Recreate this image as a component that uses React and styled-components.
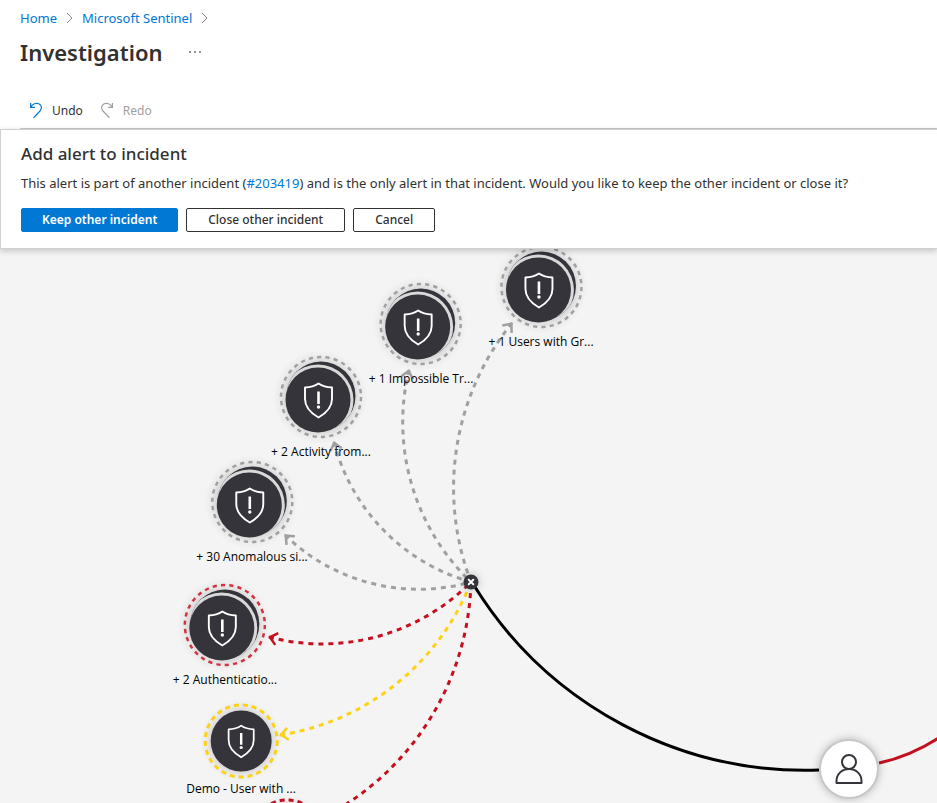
import React from "react";
import styled, { createGlobalStyle, css } from "styled-components";

const GlobalStyle = createGlobalStyle`
  *, *::before, *::after { box-sizing: border-box; }
  body {
    margin: 0;
    background: #fff;
    color: #323130;
    font-family: "Noto Sans", "Open Sans", sans-serif;
    font-size: 13px;
  }
  button { font-family: inherit; }
`;

const Page = styled.div`
  display: flex;
  flex-direction: column;
  height: 100vh;
  overflow: hidden;
`;

const Header = styled.header`
  flex: none;
  padding: 8px 0 0 20px;
`;

const Breadcrumb = styled.nav`
  display: flex;
  align-items: center;
  gap: 9px;
  height: 20px;
  line-height: 20px;
`;

const Link = styled.a`
  color: #0078d4;
  text-decoration: none;
  &:hover { text-decoration: underline; }
`;

const TitleRow = styled.div`
  display: flex;
  align-items: center;
  gap: 26px;
  height: 48px;
`;

const Title = styled.h1`
  margin: 0;
  font-size: 22px;
  line-height: 32px;
  font-weight: 600;
`;

const MoreButton = styled.button`
  display: flex;
  padding: 0;
  border: 0;
  background: none;
  cursor: pointer;
`;

const Toolbar = styled.div`
  display: flex;
  align-items: center;
  gap: 16px;
  height: 53px;
  padding: 18px 0 0 8px;
  border-bottom: 1px solid #c8c8c8;
`;

const ToolButton = styled.button`
  display: flex;
  align-items: center;
  gap: 8px;
  padding: 0;
  border: 0;
  background: none;
  font-size: 12px;
  line-height: 20px;
  color: #323130;
  cursor: pointer;
  &:disabled { color: #a19f9d; cursor: default; }
`;

const Prompt = styled.section`
  flex: none;
  position: relative;
  z-index: 1;
  height: 120px;
  padding: 12px 20px;
  background: #fff;
  border: 1px solid #d0d0d0;
  border-right: 0;
  box-shadow: 0 2px 6px rgba(0, 0, 0, 0.2);
`;

const PromptTitle = styled.h2`
  margin: 0 0 7px;
  font-size: 17px;
  line-height: 24px;
  font-weight: 500;
`;

const PromptText = styled.p`
  margin: 0 0 15px;
  line-height: 20px;
  white-space: nowrap;
`;

const Actions = styled.div`
  display: flex;
  gap: 8px;
`;

const ActionButton = styled.button`
  height: 24px;
  padding: 0 21px;
  border: 1px solid #323130;
  border-radius: 2px;
  background: #fff;
  color: #323130;
  font-size: 12px;
  line-height: 20px;
  font-weight: 500;
  cursor: pointer;
  ${(p) =>
    p.$primary &&
    css`
      padding: 0 20px;
      border-color: #0078d4;
      background: #0078d4;
      color: #fff;
      font-weight: 600;
    `}
`;

const Canvas = styled.main`
  flex: 1;
  position: relative;
  overflow: hidden;
  background: #f4f4f4;
`;

const EdgeLayer = styled.svg`
  position: absolute;
  inset: 0;
  width: 100%;
  height: 100%;
`;

const NodeButton = styled.button`
  position: absolute;
  left: ${(p) => p.$x}px;
  top: ${(p) => p.$y}px;
  transform: translate(-50%, -50px);
  display: flex;
  flex-direction: column;
  align-items: center;
  padding: 0;
  border: 0;
  background: none;
  cursor: pointer;
  svg { display: block; }
`;

const NodeLabel = styled.span`
  margin-top: ${(p) => (p.$single ? -12 : -5)}px;
  font-family: "Open Sans", "Noto Sans", sans-serif;
  font-size: 12px;
  line-height: 20px;
  white-space: nowrap;
  color: #000;
`;

const RoundButton = styled.button`
  position: absolute;
  left: ${(p) => p.$x}px;
  top: ${(p) => p.$y}px;
  transform: translate(-50%, -50%);
  display: grid;
  place-items: center;
  width: ${(p) => p.$size}px;
  height: ${(p) => p.$size}px;
  padding: 0;
  border: ${(p) => (p.$dark ? "0" : "2px solid #c8c8c8")};
  border-radius: 50%;
  background: ${(p) => (p.$dark ? "#36343b" : "#fff")};
  box-shadow: 0 0 8px rgba(0, 0, 0, 0.25);
  cursor: pointer;
`;

const GREY = "#a0a0a0";
const RED = "#c50f1f";
const YELLOW = "#fcd116";
const DARK = "#36343b";
const HUB = { x: 471, y: 333 };

const edges = [
  { x: 512, y: 74, color: GREY, id: "grey" },
  { x: 409, y: 121, color: GREY, id: "grey" },
  { x: 334, y: 193, color: GREY, id: "grey" },
  { x: 285, y: 286, color: GREY, id: "grey" },
  { x: 269, y: 388, color: RED, id: "red" },
  { x: 280, y: 486, color: YELLOW, id: "yellow" },
  { x: 328, y: 566, color: RED, id: "red" },
];

const nodes = [
  { x: 541, y: 38, label: "+ 1 Users with Gr...", color: GREY },
  { x: 421, y: 75, label: "+ 1 Impossible Tr...", color: GREY },
  { x: 321, y: 148, label: "+ 2 Activity from...", color: GREY },
  { x: 252, y: 253, label: "+ 30 Anomalous si...", color: GREY },
  { x: 225, y: 376, label: "+ 2 Authenticatio...", color: "#d13440" },
  { x: 241, y: 492, label: "Demo - User with ...", color: YELLOW, single: true },
  { x: 287, y: 587, label: "", color: RED, single: true },
];

const arc = (x1, y1, x2, y2) => {
  const r = Math.hypot(x2 - x1, y2 - y1);
  return `M${x1} ${y1} A${r} ${r} 0 0 0 ${x2} ${y2}`;
};

function Chevron() {
  return (
    <svg width="7" height="12" viewBox="0 0 7 12" fill="none" stroke="#8a8886" aria-hidden="true">
      <path d="M1 1l5 5-5 5" />
    </svg>
  );
}

function UndoIcon({ flip }) {
  return (
    <svg width="16" height="18" viewBox="0 0 16 18" fill="none" stroke={flip ? "#a19f9d" : "#0078d4"} strokeWidth="1.2" aria-hidden="true">
      <g transform={flip ? "translate(16 0) scale(-1 1)" : undefined}>
        <path d="M2.600 1V5.400H7M2.700 5.300C4.500 1.800 8 .6 10.800 1.800C13.800 3.200 14.300 6.500 12 9L5.500 15.800" />
      </g>
    </svg>
  );
}

function Shield({ x, y, scale = 1 }) {
  return (
    <g transform={`translate(${x} ${y}) scale(${scale})`} fill="none" stroke="#fff">
      <path
        d="M0 -16.500C-3.500 -14 -8 -12.600 -13.500 -12.500V-1C-13.500 8 -7 13.500 0 17.500C7 13.500 13.500 8 13.500 -1V-12.500C8 -12.600 3.500 -14 0 -16.500Z"
        strokeWidth="1.900"
        strokeLinejoin="round"
      />
      <path d="M0 -8.500V4" strokeWidth="2.600" />
      <circle cx="0" cy="7" r="1.700" fill="#fff" stroke="none" />
    </g>
  );
}

function AlertGlyph({ color, single }) {
  const id = React.useId();
  return (
    <svg width="100" height="100" viewBox="0 0 100 100" aria-hidden="true">
      <defs>
        <radialGradient id={`${id}g`}>
          <stop offset="0.7" stopColor="#000" stopOpacity="0.14" />
          <stop offset="0.85" stopColor="#000" stopOpacity="0.04" />
          <stop offset="1" stopColor="#000" stopOpacity="0" />
        </radialGradient>
        <clipPath id={`${id}c`}>
          <circle cx="50" cy="49" r="34.500" />
        </clipPath>
      </defs>
      {single ? (
        <>
          <circle cx="50" cy="50" r="41" fill={`url(#${id}g)`} />
          <circle cx="50" cy="50" r="36" fill="none" stroke={color} strokeWidth="3" strokeDasharray="5 4" />
          <circle cx="50" cy="50" r="30.500" fill={DARK} />
          <Shield x={50} y={50} scale={0.93} />
        </>
      ) : (
        <>
          <circle cx="49" cy="50" r="47" fill={`url(#${id}g)`} />
          <circle cx="50" cy="50" r="40" fill="none" stroke={color} strokeWidth="2.500" strokeDasharray="4.200 4.176" />
          <circle cx="50" cy="49" r="34.500" fill={DARK} />
          <circle cx="47" cy="53" r="35.500" fill="#d9d9d9" clipPath={`url(#${id}c)`} />
          <circle cx="47" cy="53" r="32.500" fill={DARK} />
          <Shield x={47.5} y={53} />
        </>
      )}
    </svg>
  );
}

export default function App() {
  return (
    <Page>
      <GlobalStyle />
      <Header>
        <Breadcrumb aria-label="Breadcrumb">
          <Link href="#home">Home</Link>
          <Chevron />
          <Link href="#sentinel">Microsoft Sentinel</Link>
          <Chevron />
        </Breadcrumb>
        <TitleRow>
          <Title>Investigation</Title>
          <MoreButton aria-label="More">
            <svg width="12" height="4" viewBox="0 0 12 4" fill="#605e5c">
              <circle cx="1" cy="2" r="0.900" />
              <circle cx="6" cy="2" r="0.900" />
              <circle cx="11" cy="2" r="0.900" />
            </svg>
          </MoreButton>
        </TitleRow>
        <Toolbar>
          <ToolButton>
            <UndoIcon />
            Undo
          </ToolButton>
          <ToolButton disabled>
            <UndoIcon flip />
            Redo
          </ToolButton>
        </Toolbar>
      </Header>

      <Prompt aria-labelledby="prompt-title">
        <PromptTitle id="prompt-title">Add alert to incident</PromptTitle>
        <PromptText>
          This alert is part of another incident (<Link href="#203419">#203419</Link>) and is the only alert in that
          incident. Would you like to keep the other incident or close it?
        </PromptText>
        <Actions>
          <ActionButton $primary>Keep other incident</ActionButton>
          <ActionButton>Close other incident</ActionButton>
          <ActionButton>Cancel</ActionButton>
        </Actions>
      </Prompt>

      <Canvas>
        <EdgeLayer fill="none" strokeWidth="3" aria-hidden="true">
          <defs>
            {[["grey", GREY], ["red", RED], ["yellow", YELLOW]].map(([id, color]) => (
              <marker key={id} id={id} viewBox="-2 -8 14 16" markerWidth="14" markerHeight="16" refX="0" refY="0" orient="auto" markerUnits="userSpaceOnUse">
                <path d="M8 -6L1 0L8 6" fill="none" stroke={color} strokeWidth="2.500" />
              </marker>
            ))}
          </defs>
          {edges.map((e) => (
            <path key={`${e.x}-${e.y}`} d={arc(e.x, e.y, HUB.x, HUB.y)} stroke={e.color} strokeDasharray="5 5" markerStart={`url(#${e.id})`} />
          ))}
          <path d={arc(475, 338, 819, 521)} stroke="#000" />
          <path d="M879 514Q911 507 940 488" stroke={RED} />
        </EdgeLayer>
        {nodes.map((n) => (
          <NodeButton key={n.x} $x={n.x} $y={n.y} aria-label={n.label || "Alert"}>
            <AlertGlyph color={n.color} single={n.single} />
            <NodeLabel $single={n.single}>{n.label}</NodeLabel>
          </NodeButton>
        ))}
        <RoundButton $x={HUB.x} $y={HUB.y} $size={15} $dark aria-label="Collapse">
          <svg width="7" height="7" viewBox="0 0 7 7" stroke="#fff" strokeWidth="1.800" aria-hidden="true">
            <path d="M.5 .5l6 6M6.500 .5l-6 6" />
          </svg>
        </RoundButton>
        <RoundButton $x={849} $y={520} $size={60} aria-label="User">
          <svg width="28" height="30" viewBox="0 0 28 30" fill="none" stroke={DARK} strokeWidth="2" aria-hidden="true">
            <circle cx="14" cy="8" r="7" />
            <path d="M1.500 29V27C1.500 20 7 15 14 15S26.500 20 26.500 27V29Z" strokeLinejoin="round" />
          </svg>
        </RoundButton>
      </Canvas>
    </Page>
  );
}
